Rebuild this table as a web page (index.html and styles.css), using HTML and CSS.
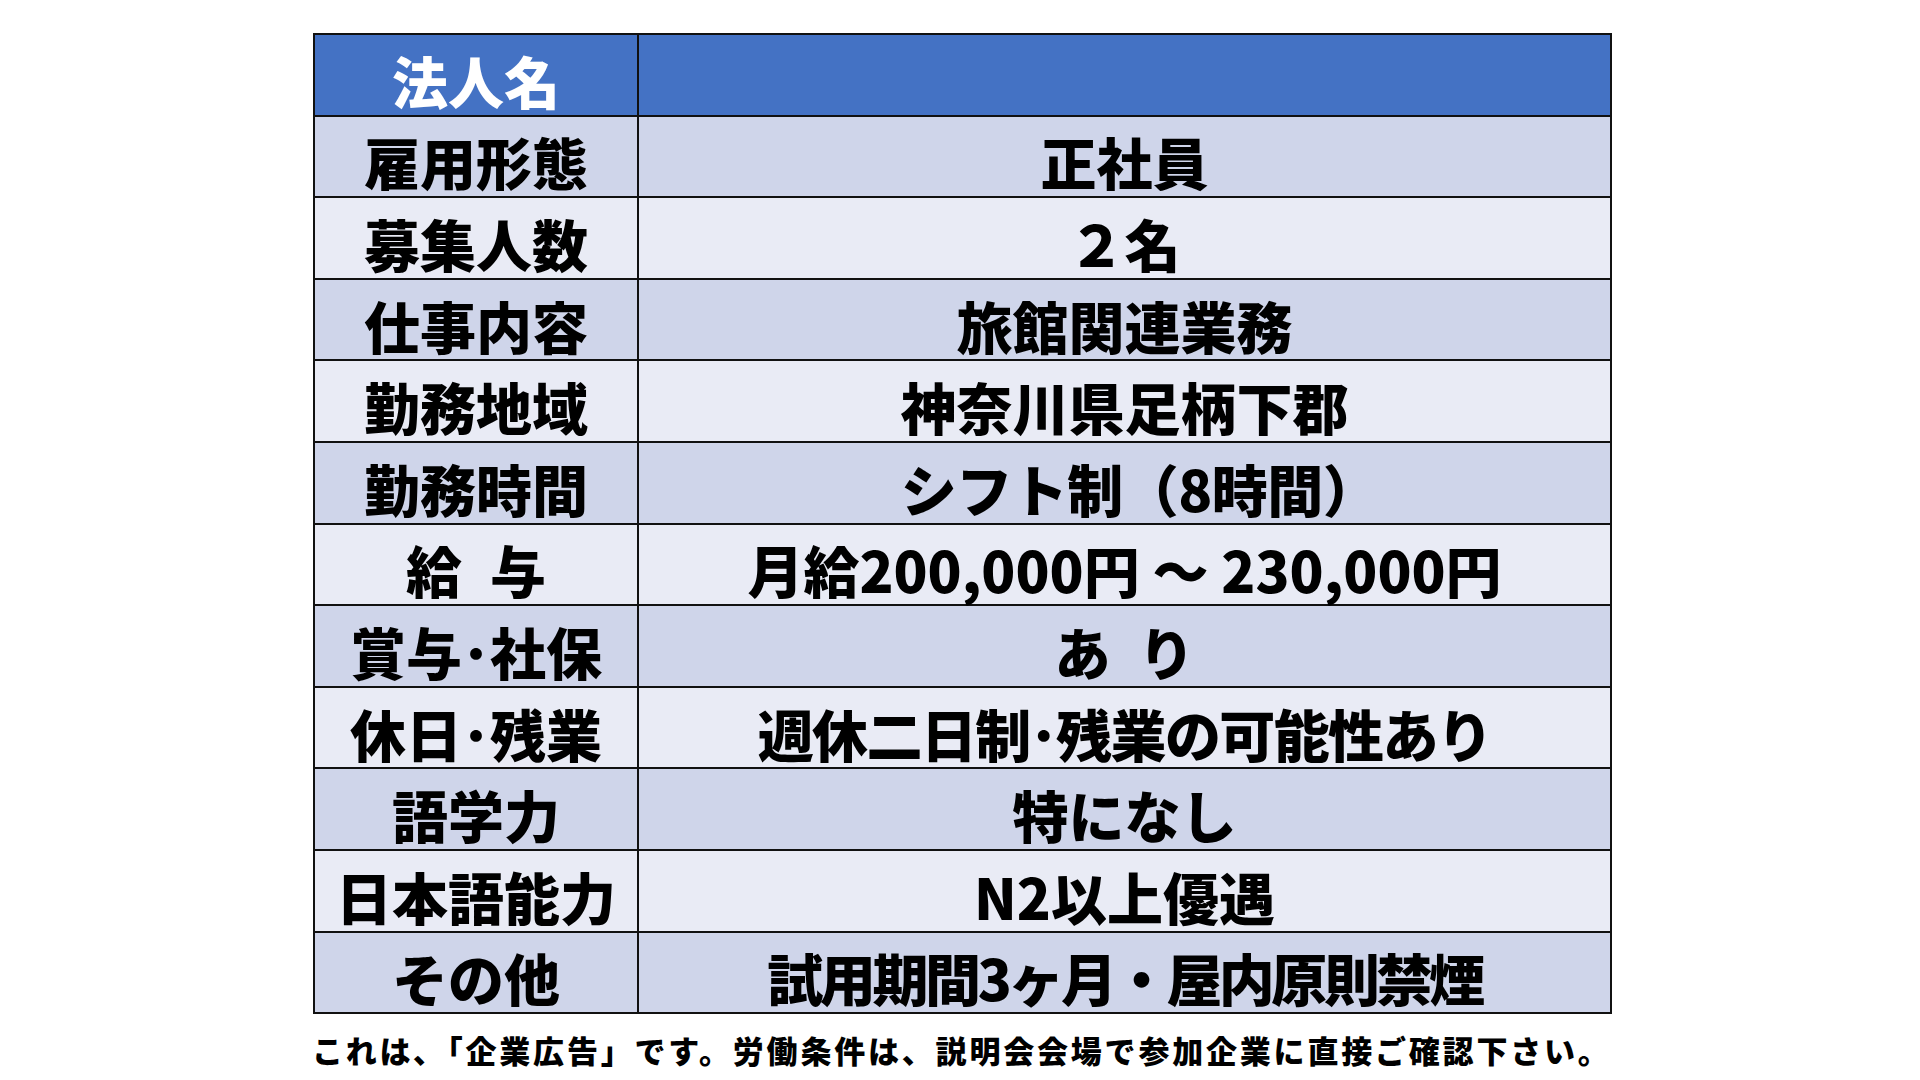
FILE: index.html
```html
<!DOCTYPE html>
<html lang="ja">
<head>
<meta charset="utf-8">
<title>求人情報</title>
<link rel="stylesheet" href="styles.css">
</head>
<body>
<main class="sheet">
  <table class="job">
    <colgroup><col class="c-label"><col class="c-value"></colgroup>
    <thead>
      <tr class="head"><th>法人名</th><td></td></tr>
    </thead>
    <tbody>
      <tr class="dark"><th>雇用形態</th><td>正社員</td></tr>
      <tr class="light"><th>募集人数</th><td>２名</td></tr>
      <tr class="dark"><th>仕事内容</th><td>旅館関連業務</td></tr>
      <tr class="light"><th>勤務地域</th><td>神奈川県足柄下郡</td></tr>
      <tr class="dark"><th>勤務時間</th><td class="shift">シフト制（8時間）</td></tr>
      <tr class="light"><th>給&ensp;与</th><td>月給200,000円 ～ 230,000円</td></tr>
      <tr class="dark"><th>賞与･社保</th><td>あ&ensp;り</td></tr>
      <tr class="light"><th>休日･残業</th><td class="tight1">週休二日制･残業の可能性あり</td></tr>
      <tr class="dark"><th>語学力</th><td>特になし</td></tr>
      <tr class="light"><th>日本語能力</th><td>N2以上優遇</td></tr>
      <tr class="dark"><th>その他</th><td class="tight2">試用期間3ヶ月・屋内原則禁煙</td></tr>
    </tbody>
  </table>
  <p class="note">これは､「企業広告」です。労働条件は、説明会会場で参加企業に直接ご確認下さい。</p>
</main>
</body>
</html>
```

FILE: styles.css
```css
html, body {
  margin: 0;
  padding: 0;
  background: #ffffff;
}

body {
  font-family: "Noto Sans CJK JP", "Noto Sans", sans-serif;
  color: #000000;
}

.sheet {
  width: 1297px;
  margin: 33px 0 0 313px;
}

.job {
  width: 1297px;
  border-collapse: collapse;
  table-layout: fixed;
  border: 2px solid #111;
}

.c-label { width: 324px; }
.c-value { width: 973px; }

.job th,
.job td {
  height: 81.6px;
  padding: 10px 0 0 0;
  border: 2px solid #111;
  text-align: center;
  vertical-align: middle;
  font-size: 56px;
  font-weight: 900;
  line-height: 1;
  white-space: nowrap;
  box-sizing: border-box;
}

.job td.tight1 { letter-spacing: -1.6px; }
.job td.tight2 { letter-spacing: -3.4px; }
.job td.shift { padding-left: 30px; letter-spacing: -0.5px; }

.head th,
.head td {
  background: #4472c4;
  color: #ffffff;
}

.dark th,
.dark td {
  background: #cfd5ea;
}

.light th,
.light td {
  background: #e9ebf5;
}

.note {
  margin: 17px 0 0 -1px;
  font-size: 31px;
  font-weight: 900;
  line-height: 1.2;
  letter-spacing: 2.8px;
  white-space: nowrap;
}
```
